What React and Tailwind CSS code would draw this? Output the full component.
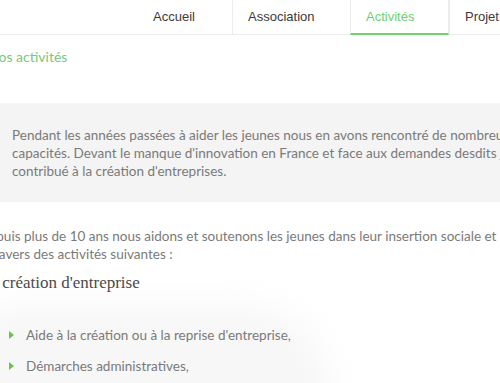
import React from "react";

const navItems = [
  { label: "Accueil", w: "w-[94px]" },
  { label: "Association", w: "w-[118px]" },
  { label: "Activités", w: "w-[99px]", active: true },
  { label: "Projet", w: "w-[90px]" },
];

function Bullet() {
  return (
    <svg width="5" height="8" viewBox="0 0 5 8" className="shrink-0">
      <path d="M0 0 L5 4 L0 8 Z" fill="#6cc24a" />
    </svg>
  );
}

function TopNavigation() {
  return (
    <div className="flex h-[35px] border-b border-[#ececec] pl-[138px] font-['Liberation_Sans',Arial,sans-serif] text-[13px] text-[#3a3a3a]">
      {navItems.map((item) => (
        <div
          key={item.label}
          className={
            item.active
              ? "flex items-center shrink-0 pl-[15px] w-[99px] border-x border-[#ececec] border-b-2 border-b-[#72d06f] -mb-px text-[#6fcf6c]"
              : "flex items-center shrink-0 pl-[15px] border-l border-[#ececec] first:border-l-0 " + item.w
          }
        >
          {item.label}
        </div>
      ))}
    </div>
  );
}

export default function App() {
  return (
    <div className="relative w-[500px] h-[383px] overflow-hidden bg-white">
      <div className="absolute left-[-60px] top-[305px] w-[390px] h-[170px] rounded-full bg-[#f7f7f7] blur-[16px]" />
      <div className="relative">
        <TopNavigation />
        <div className="ml-[-25px] font-['Lato','Noto_Sans',sans-serif] text-[13.5px] text-[#7a7a7a]">
          <h2 className="mt-[12px] ml-[13px] text-[14px] leading-[20px] text-[#78c878] font-normal">
            Nos activités
          </h2>
          <div className="mt-[36px] ml-[-10px] w-[700px] bg-[#f4f4f4] pt-[23px] pb-[22px] pl-[47px] leading-[18px] whitespace-nowrap">
            Pendant les années passées à aider les jeunes nous en avons rencontré de nombreux talents aux belles
            <br />
            capacités. Devant le manque d'innovation en France et face aux demandes desdits jeunes, nous avons
            <br />
            contribué à la création d'entreprises.
          </div>
          <p className="mt-[25px] ml-[4px] leading-[18px] whitespace-nowrap">
            Depuis plus de 10 ans nous aidons et soutenons les jeunes dans leur insertion sociale et professionnelle
            <br />à travers des activités suivantes :
          </p>
          <h3 className="mt-[8px] ml-[5px] font-['Liberation_Serif',serif] text-[17px] leading-[24px] text-[#4a4a4a] font-normal">
            La création d'entreprise
          </h3>
          <ul className="mt-[31px] ml-[34px] flex flex-col gap-[13px]">
            <li className="flex items-center gap-[12px] leading-[18px]">
              <Bullet />
              <span>Aide à la création ou à la reprise d'entreprise,</span>
            </li>
            <li className="flex items-center gap-[12px] leading-[18px]">
              <Bullet />
              <span>Démarches administratives,</span>
            </li>
          </ul>
        </div>
      </div>
    </div>
  );
}
